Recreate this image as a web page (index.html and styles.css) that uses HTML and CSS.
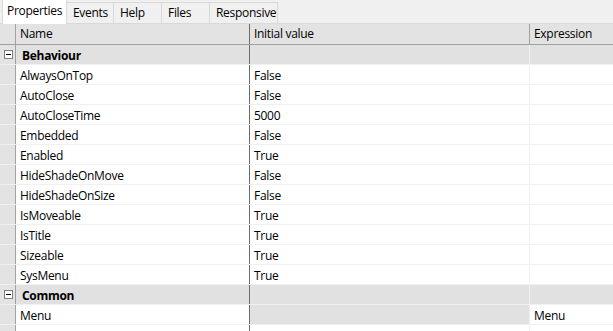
FILE: index.html
```html
<!DOCTYPE html>
<html lang="en">
<head>
    <meta charset="UTF-8">
    <title>Properties</title>
    <link rel="stylesheet" href="styles.css">
</head>
<body>
    <div class="tabs">
        <div class="tab active">Properties</div>
        <div class="tab w47">Events</div>
        <div class="tab w48">Help</div>
        <div class="tab w48">Files</div>
        <div class="tab w68">Responsive</div>
    </div>
    <div class="grid">
        <div class="row head">
            <div class="gut"></div>
            <div class="cell name">Name</div>
            <div class="cell val">Initial value</div>
            <div class="cell expr">Expression</div>
        </div>

        <div class="row group">
            <div class="gut"><span class="box"></span></div>
            <div class="cell name">Behaviour</div>
            <div class="cell val"></div>
            <div class="cell expr"></div>
        </div>
        <div class="row"><div class="gut"></div><div class="cell name">AlwaysOnTop</div><div class="cell val">False</div><div class="cell expr"></div></div>
        <div class="row"><div class="gut"></div><div class="cell name">AutoClose</div><div class="cell val">False</div><div class="cell expr"></div></div>
        <div class="row"><div class="gut"></div><div class="cell name">AutoCloseTime</div><div class="cell val">5000</div><div class="cell expr"></div></div>
        <div class="row"><div class="gut"></div><div class="cell name">Embedded</div><div class="cell val">False</div><div class="cell expr"></div></div>
        <div class="row"><div class="gut"></div><div class="cell name">Enabled</div><div class="cell val">True</div><div class="cell expr"></div></div>
        <div class="row"><div class="gut"></div><div class="cell name">HideShadeOnMove</div><div class="cell val">False</div><div class="cell expr"></div></div>
        <div class="row"><div class="gut"></div><div class="cell name">HideShadeOnSize</div><div class="cell val">False</div><div class="cell expr"></div></div>
        <div class="row"><div class="gut"></div><div class="cell name">IsMoveable</div><div class="cell val">True</div><div class="cell expr"></div></div>
        <div class="row"><div class="gut"></div><div class="cell name">IsTitle</div><div class="cell val">True</div><div class="cell expr"></div></div>
        <div class="row"><div class="gut"></div><div class="cell name">Sizeable</div><div class="cell val">True</div><div class="cell expr"></div></div>
        <div class="row"><div class="gut"></div><div class="cell name">SysMenu</div><div class="cell val">True</div><div class="cell expr"></div></div>

        <div class="row group">
            <div class="gut"><span class="box"></span></div>
            <div class="cell name">Common</div>
            <div class="cell val"></div>
            <div class="cell expr"></div>
        </div>
        <div class="row"><div class="gut"></div><div class="cell name">Menu</div><div class="cell val grey"></div><div class="cell expr">Menu</div></div>
        <div class="row"><div class="gut"></div><div class="cell name">ScreenPosition</div><div class="cell val">InScreenCenter</div><div class="cell expr"></div></div>
    </div>
</body>
</html>
```

FILE: styles.css
```css
html {
    font-size: 12px;
}
body {
    margin: 0;
    background: #fff;
    font-family: "Open Sans", "Noto Sans", sans-serif;
    font-size: 12px;
    letter-spacing: -0.3px;
    color: #000;
    overflow: hidden;
    height: 331px;
}
.tabs {
    display: flex;
    align-items: flex-end;
    height: 24px;
    background: #f0f0f0;
    padding-left: 2px;
    box-sizing: border-box;
    border-bottom: 1px solid #d9d9d9;
}
.tab {
    height: 21px;
    line-height: 20px;
    padding-left: 6px;
    box-sizing: border-box;
    border: 1px solid #d9d9d9;
    border-bottom: none;
    border-left: none;
    background: #f0f0f0;
}
.tab.active {
    height: 25px;
    margin-bottom: -1px;
    width: 65px;
    padding-left: 4px;
    line-height: 22px;
    background: #fff;
    border-left: 1px solid #d9d9d9;
}
.w47 { width: 47px; }
.w48 { width: 48px; }
.w68 { width: 68px; }

.grid {
    display: flex;
    flex-direction: column;
}
.row {
    display: grid;
    grid-template-columns: 16px 233px 280px 1fr;
    height: 20px;
    box-sizing: border-box;
    border-bottom: 1px solid #f0f0f0;
}
.gut {
    background: #e3e3e3;
    border-right: 1px solid #a0a0a0;
    display: flex;
    align-items: center;
    padding-left: 4px;
}
.cell {
    padding-left: 4px;
    line-height: 21px;
    white-space: nowrap;
    overflow: hidden;
}
.val {
    border-left: 1px solid #6d6d6d;
}
.expr {
    border-left: 1px solid #f0f0f0;
}
.head {
    height: 21px;
    background: #e3e3e3;
    border-bottom: 1px solid #a0a0a0;
}
.head .cell {
    line-height: 20px;
}
.head .expr {
    border-left: 1px solid #a0a0a0;
}
.group {
    background: #e1e1e1;
}
.group .name {
    font-weight: bold;
    padding-left: 6px;
}
.box {
    width: 7px;
    height: 7px;
    border: 1px solid #808080;
    background: #fff;
    position: relative;
}
.box::after {
    content: "";
    position: absolute;
    left: 1px;
    top: 3px;
    width: 5px;
    height: 1px;
    background: #000;
}
.grey {
    background: #e1e1e1;
}
```
